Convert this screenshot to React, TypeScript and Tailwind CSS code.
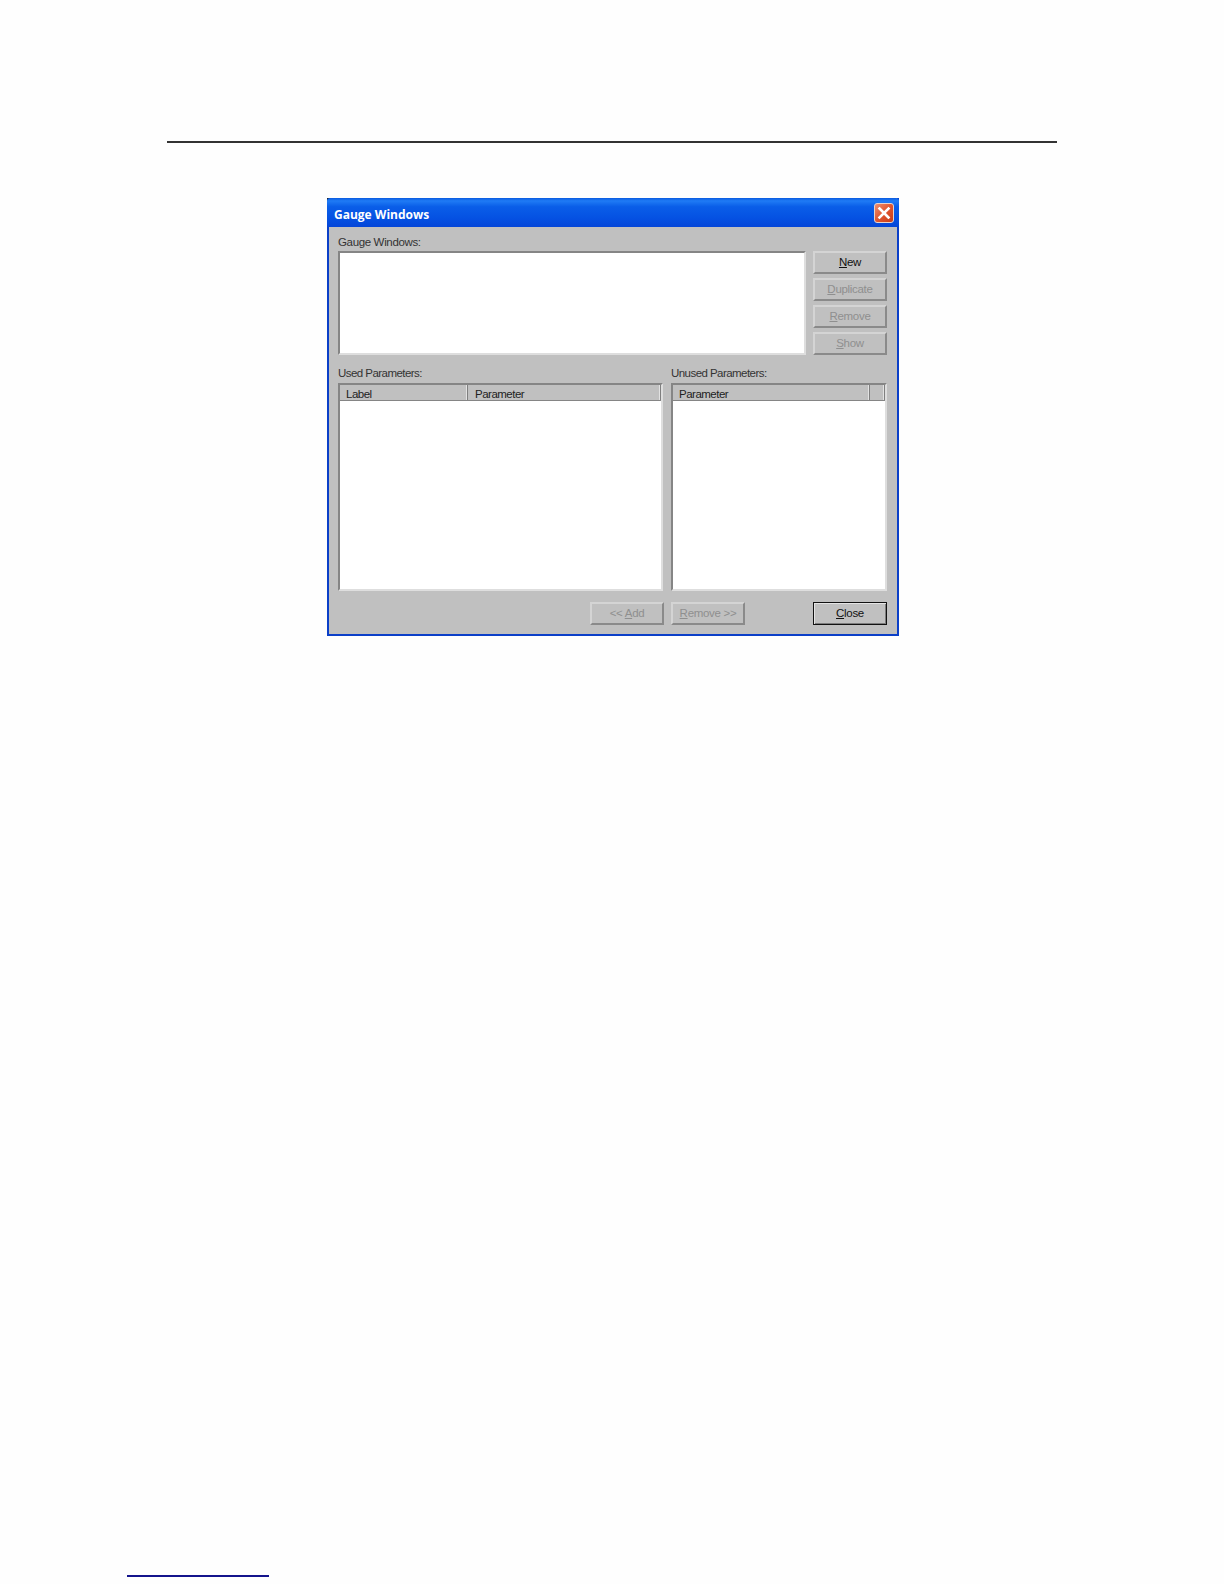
const fontUi = "font-['Liberation_Sans',Arial,sans-serif]";

function WinButton({ mnemonic, rest, before, disabled, isDefault, className }: {
  mnemonic: string;
  rest: string;
  before?: string;
  disabled?: boolean;
  isDefault?: boolean;
  className?: string;
}) {
  return (
    <div
      className={`flex h-[23px] w-[74px] items-center justify-center bg-[#c0c0c0] text-[11.5px] leading-none tracking-[-0.3px] ${
        isDefault
          ? 'border border-[#111] shadow-[inset_1px_1px_0_#e4e4e4,inset_-1px_-1px_0_#7c7c7c]'
          : 'border-2 border-t-[#d4d4d4] border-l-[#d4d4d4] border-r-[#8a8a8a] border-b-[#8a8a8a]'
      } ${disabled ? 'text-[#8f8f8f]' : 'text-[#111]'} ${className ?? ''}`}
    >
      <span>
        {before}
        <u>{mnemonic}</u>
        {rest}
      </span>
    </div>
  );
}

function HeaderCell({ label, className }: { label?: string; className?: string }) {
  return (
    <div className={`flex h-[15px] items-center border-r border-r-[#7f7f7f] pl-[6px] pt-[4px] text-[11.5px] tracking-[-0.5px] text-[#222] shadow-[inset_-1px_0_0_#e2e2e2] ${className ?? ''}`}>
      {label}
    </div>
  );
}

function ListPanel({ className, children }: { className?: string; children?: React.ReactNode }) {
  return (
    <div className={`border-2 border-t-[#858585] border-l-[#858585] border-r-[#dedede] border-b-[#dedede] bg-white ${className ?? ''}`}>
      {children}
    </div>
  );
}

export default function App() {
  return (
    <div className={`h-[1584px] w-[1224px] overflow-hidden bg-[#fefefe] pt-[141px] ${fontUi}`}>
      <div className="ml-[167px] h-[2px] w-[890px] bg-[#333]" />

      {/* dialog */}
      <div className="ml-[327px] mt-[55px] w-[572px] border-x-2 border-b-2 border-[#0b3fc8] bg-[#c0c0c0] pb-[1px]">
        <div className="-mx-[2px] bg-[linear-gradient(135deg,#222_3px,transparent_3px)]">
          <div className="flex h-[29px] items-center justify-between rounded-t-[3px] bg-[linear-gradient(180deg,#0a5ae0_0%,#1f7bf5_10%,#0a5ee8_30%,#0551e2_70%,#0445d8_100%)] pl-[7px] pr-[5px]">
            <span className="pt-[5px] font-['Open_Sans',sans-serif] text-[12px] font-bold text-white">Gauge Windows</span>
            <div className="flex h-[20px] w-[20px] items-center justify-center rounded-[3px] border border-[#e8d4cc] bg-[linear-gradient(135deg,#ee9070_0%,#e0562f_50%,#c83c18_100%)]">
              <svg width="14" height="14" viewBox="0 0 14 14">
                <path d="M2.5 2.5 L11.5 11.5 M11.5 2.5 L2.5 11.5" stroke="#fff" strokeWidth="2.6" strokeLinecap="square" />
              </svg>
            </div>
          </div>
        </div>

        <div className="pb-[8px] pl-[9px] pr-[10px]">
          <div className="flex h-[24px] items-end pb-[3px] text-[11.5px] leading-none tracking-[-0.35px] text-[#333]">Gauge Windows:</div>
          <div className="flex gap-[7px]">
            <ListPanel className="h-[104px] w-[468px]" />
            <div className="flex flex-col gap-[4px]">
              <WinButton mnemonic="N" rest="ew" />
              <WinButton mnemonic="D" rest="uplicate" disabled />
              <WinButton mnemonic="R" rest="emove" disabled />
              <WinButton mnemonic="S" rest="how" disabled />
            </div>
          </div>

          <div className="mt-[12px] flex gap-[8px]">
            <div className="w-[325px]">
              <div className="h-[16px] pt-[1px] text-[11.5px] leading-none tracking-[-0.55px] text-[#333]">Used Parameters:</div>
              <ListPanel className="h-[208px]">
                <div className="flex border-b border-b-[#858585] bg-[#c0c0c0]">
                  <HeaderCell label="Label" className="w-[128px]" />
                  <HeaderCell label="Parameter" className="flex-1 pl-[7px]" />
                </div>
              </ListPanel>
            </div>
            <div className="w-[216px]">
              <div className="h-[16px] pt-[1px] text-[11.5px] leading-none tracking-[-0.55px] text-[#333]">Unused Parameters:</div>
              <ListPanel className="h-[208px]">
                <div className="flex border-b border-b-[#858585] bg-[#c0c0c0]">
                  <HeaderCell label="Parameter" className="w-[197px]" />
                  <HeaderCell className="flex-1" />
                </div>
              </ListPanel>
            </div>
          </div>

          <div className="mt-[11px] flex">
            <WinButton before="<< " mnemonic="A" rest="dd" disabled className="ml-[252px]" />
            <WinButton mnemonic="R" rest="emove >>" disabled className="ml-[7px]" />
            <WinButton mnemonic="C" rest="lose" isDefault className="ml-[68px]" />
          </div>
        </div>
      </div>

      <div className="ml-[127px] mt-[939px] h-[2px] w-[142px] bg-[#14148c]" />
    </div>
  );
}
